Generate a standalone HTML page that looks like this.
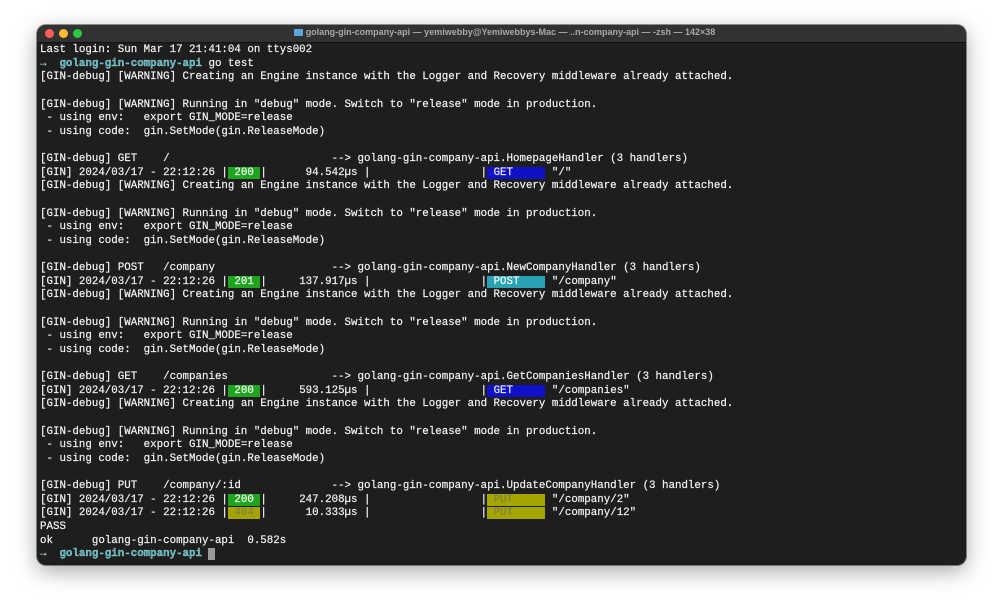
<!DOCTYPE html>
<html><head><meta charset="utf-8"><style>
html,body{margin:0;padding:0;background:#fff;width:1003px;height:613px;overflow:hidden}
.win{position:absolute;left:37px;top:25px;width:929px;height:540px;background:#1e1e1e;border-radius:9px;overflow:hidden;box-shadow:0 6px 22px rgba(0,0,0,.35),0 0 0 1px rgba(0,0,0,.4)}
.tb{height:17px;background:#323232;border-bottom:1px solid #111;position:relative}
.d{position:absolute;top:4px;width:9px;height:9px;border-radius:50%}
.tt{position:absolute;left:0;right:0;top:2px;text-align:center;font:bold 9px "Liberation Sans",sans-serif;color:#a8a8a8;padding-left:6px}
.fold{display:inline-block;width:9px;height:7px;background:#5aa6d8;border-radius:1px;margin-right:3px;vertical-align:-1px}
pre{position:absolute;left:3px;top:19px;margin:0;font:10.8px/13.63px "Liberation Mono",monospace;color:#f2f2f2;-webkit-text-stroke:0.2px #f2f2f2}
.g{background:#1ea51e;color:#fff}.b{background:#1010c8;color:#e8e8e8}.c{background:#29a3b3;color:#fff}
.y{background:#a5a500;color:#7a7a50;-webkit-text-stroke:0}.a{color:#41c96b}.p{color:#3db8c2;font-weight:bold}
.cur{background:#9a9a9a}
</style></head><body>
<div class="win">
<div class="tb"><div class="d" style="left:8px;background:#fe5f57"></div><div class="d" style="left:22px;background:#febc2e"></div><div class="d" style="left:36px;background:#28c840"></div>
<div class="tt"><span class="fold"></span>golang-gin-company-api — yemiwebby@Yemiwebbys-Mac — ..n-company-api — -zsh — 142×38</div></div>
<pre>Last login: Sun Mar 17 21:41:04 on ttys002
<span class="a">→</span>  <span class="p">golang-gin-company-api</span> go test
[GIN-debug] [WARNING] Creating an Engine instance with the Logger and Recovery middleware already attached.

[GIN-debug] [WARNING] Running in "debug" mode. Switch to "release" mode in production.
 - using env:   export GIN_MODE=release
 - using code:  gin.SetMode(gin.ReleaseMode)

[GIN-debug] GET    /                         --> golang-gin-company-api.HomepageHandler (3 handlers)
[GIN] 2024/03/17 - 22:12:26 |<span class="g"> 200 </span>|      94.542µs |                 |<span class="b"> GET     </span> "/"
[GIN-debug] [WARNING] Creating an Engine instance with the Logger and Recovery middleware already attached.

[GIN-debug] [WARNING] Running in "debug" mode. Switch to "release" mode in production.
 - using env:   export GIN_MODE=release
 - using code:  gin.SetMode(gin.ReleaseMode)

[GIN-debug] POST   /company                  --> golang-gin-company-api.NewCompanyHandler (3 handlers)
[GIN] 2024/03/17 - 22:12:26 |<span class="g"> 201 </span>|     137.917µs |                 |<span class="c"> POST    </span> "/company"
[GIN-debug] [WARNING] Creating an Engine instance with the Logger and Recovery middleware already attached.

[GIN-debug] [WARNING] Running in "debug" mode. Switch to "release" mode in production.
 - using env:   export GIN_MODE=release
 - using code:  gin.SetMode(gin.ReleaseMode)

[GIN-debug] GET    /companies                --> golang-gin-company-api.GetCompaniesHandler (3 handlers)
[GIN] 2024/03/17 - 22:12:26 |<span class="g"> 200 </span>|     593.125µs |                 |<span class="b"> GET     </span> "/companies"
[GIN-debug] [WARNING] Creating an Engine instance with the Logger and Recovery middleware already attached.

[GIN-debug] [WARNING] Running in "debug" mode. Switch to "release" mode in production.
 - using env:   export GIN_MODE=release
 - using code:  gin.SetMode(gin.ReleaseMode)

[GIN-debug] PUT    /company/:id              --> golang-gin-company-api.UpdateCompanyHandler (3 handlers)
[GIN] 2024/03/17 - 22:12:26 |<span class="g"> 200 </span>|     247.208µs |                 |<span class="y"> PUT     </span> "/company/2"
[GIN] 2024/03/17 - 22:12:26 |<span class="y"> 404 </span>|      10.333µs |                 |<span class="y"> PUT     </span> "/company/12"
PASS
ok      golang-gin-company-api  0.582s
<span class="a">→</span>  <span class="p">golang-gin-company-api</span> <span class="cur"> </span></pre>
</div>
</body></html>
